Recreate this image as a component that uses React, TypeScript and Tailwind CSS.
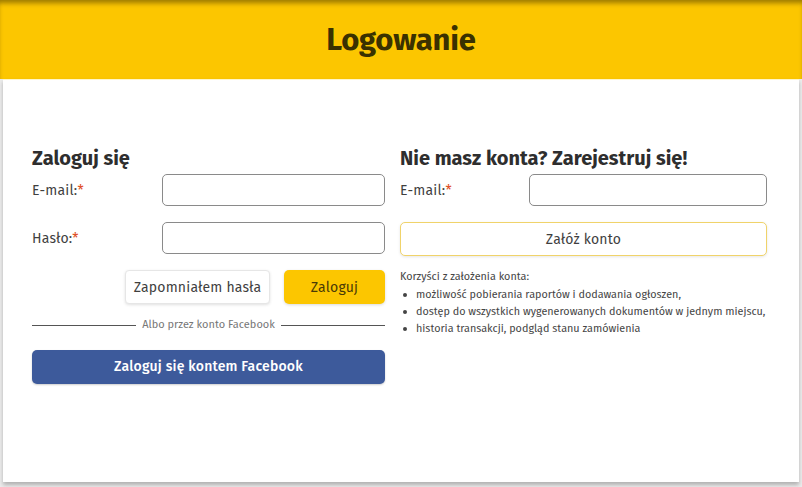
import React from 'react';

const font = { fontFamily: '"Fira Sans", "Open Sans", "Noto Sans", sans-serif' };

function Label({ text }: { text: string }) {
  return (
    <label className="text-[14px] text-[#3f3f3f] tracking-[0.2px]">
      {text}
      <span className="text-[#e0522a]">*</span>
    </label>
  );
}

const benefits = [
  'możliwość pobierania raportów i dodawania ogłoszen,',
  'dostęp do wszystkich wygenerowanych dokumentów w jednym miejscu,',
  'historia transakcji, podgląd stanu zamówienia',
];

export default function App() {
  return (
    <div className="w-[802px] h-[487px] bg-[#ececec] overflow-hidden" style={font}>
      {/* Header */}
      <header className="h-[79px] bg-[#fcc600] flex items-center justify-center shadow-[inset_0_5px_5px_-2px_rgba(90,70,0,0.6)]">
        <h1 className="text-[31px] font-bold text-[#3a3100] tracking-[-0.2px] leading-none pb-[1px]">
          Logowanie
        </h1>
      </header>

      {/* Card */}
      <div className="mx-[3px] h-[403px] bg-white shadow-[0_3px_4px_rgba(0,0,0,0.25)] border-t border-[#fff6c8] pt-[65px] pl-[29px] pr-[30px] flex gap-[15px]">
        {/* Login */}
        <div className="w-[353px]">
          <h2 className="text-[20px] font-bold text-[#2e2e2e] leading-[26px]">Zaloguj się</h2>
          <div className="mt-[3px] flex items-center justify-between">
            <Label text="E-mail:" />
            <input className="w-[223px] h-[32px] rounded-[5px] border border-[#8a8a8a] bg-white" />
          </div>
          <div className="mt-[16px] flex items-center justify-between">
            <Label text="Hasło:" />
            <input type="password" className="w-[223px] h-[32px] rounded-[5px] border border-[#8a8a8a] bg-white" />
          </div>
          <div className="mt-[16px] flex justify-end gap-[14px]">
            <button className="h-[34px] w-[145px] whitespace-nowrap rounded-[4px] border border-[#e6e6e6] bg-white shadow-[0_1px_3px_rgba(0,0,0,0.12)] text-[14px] text-[#3f3f3f] tracking-[0.2px]">
              Zapomniałem hasła
            </button>
            <button className="h-[34px] w-[101px] rounded-[5px] bg-[#fcc600] shadow-[0_1px_3px_rgba(0,0,0,0.15)] text-[14px] text-[#4a3a06] tracking-[0.2px]">
              Zaloguj
            </button>
          </div>
          <div className="mt-[13px] flex items-center gap-[6px]">
            <div className="flex-1 h-px bg-[#555]" />
            <span className="text-[11px] text-[#777]">Albo przez konto Facebook</span>
            <div className="flex-1 h-px bg-[#555]" />
          </div>
          <button className="mt-[16px] w-full h-[34px] rounded-[5px] bg-[#3d5a9b] text-white text-[14px] font-medium tracking-[0.2px] shadow-[0_1px_2px_rgba(0,0,0,0.2)]">
            Zaloguj się kontem Facebook
          </button>
        </div>

        {/* Register */}
        <div className="w-[367px]">
          <h2 className="text-[20px] font-bold text-[#2e2e2e] leading-[26px]">Nie masz konta? Zarejestruj się!</h2>
          <div className="mt-[3px] flex items-center justify-between">
            <Label text="E-mail:" />
            <input className="w-[238px] h-[32px] rounded-[5px] border border-[#8a8a8a] bg-white" />
          </div>
          <button className="mt-[16px] w-full h-[34px] rounded-[5px] border border-[#f0d36a] bg-white shadow-[0_1px_3px_rgba(0,0,0,0.1)] text-[14px] text-[#3f3f3f] tracking-[0.2px]">
            Załóż konto
          </button>
          <div className="mt-[12px] text-[10.8px] text-[#444] leading-[17px] whitespace-nowrap">
            <p>Korzyści z założenia konta:</p>
            <ul className="mt-[1px]">
              {benefits.map((b) => (
                <li key={b} className="flex items-center gap-[9px] pl-[3px]">
                  <span className="w-[4px] h-[4px] rounded-full bg-[#444] shrink-0" />
                  {b}
                </li>
              ))}
            </ul>
          </div>
        </div>
      </div>
    </div>
  );
}
